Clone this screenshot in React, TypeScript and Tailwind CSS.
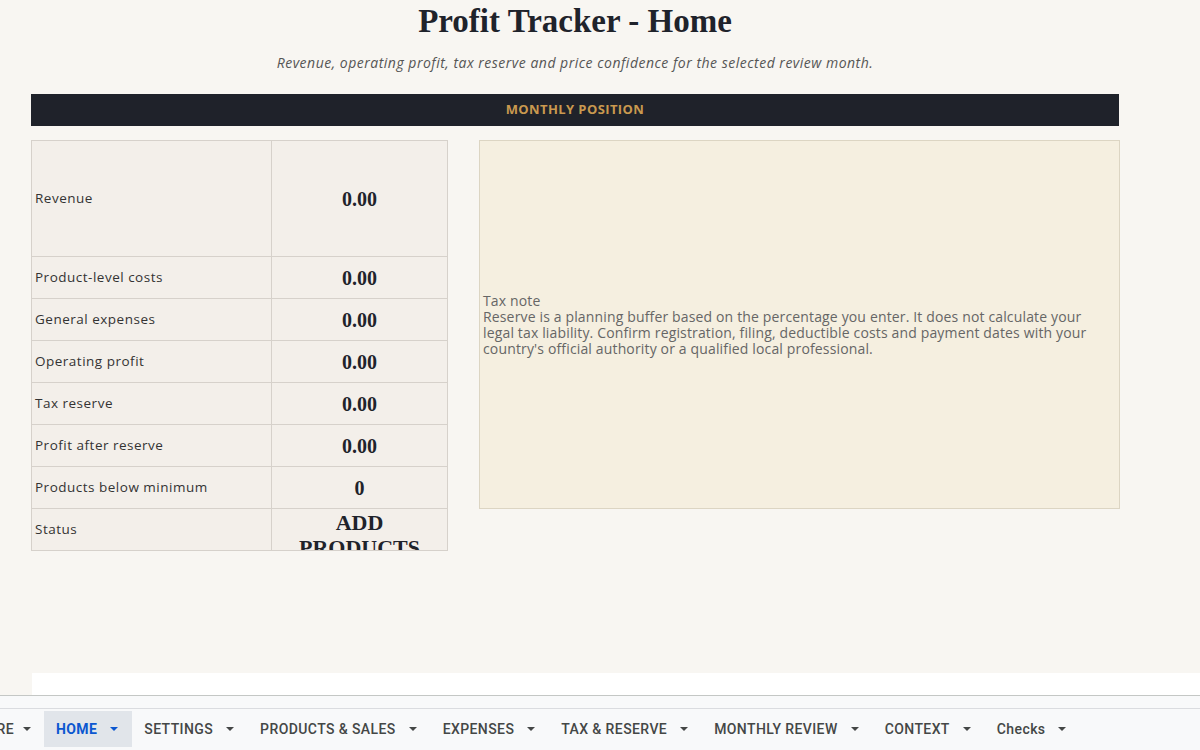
import React from "react";

const rows: { label: string; value: string; tall?: boolean }[] = [
  { label: "Revenue", value: "0.00", tall: true },
  { label: "Product-level costs", value: "0.00" },
  { label: "General expenses", value: "0.00" },
  { label: "Operating profit", value: "0.00" },
  { label: "Tax reserve", value: "0.00" },
  { label: "Profit after reserve", value: "0.00" },
  { label: "Products below minimum", value: "0" },
];

const tabs = ["SETTINGS", "PRODUCTS & SALES", "EXPENSES", "TAX & RESERVE", "MONTHLY REVIEW", "CONTEXT", "Checks"];

function Caret({ className = "fill-[#444746]" }: { className?: string }) {
  return (
    <svg width="8" height="4" viewBox="0 0 8 4" className={className}>
      <path d="M0 0h8L4 4z" />
    </svg>
  );
}

function Tab({ label, active }: { label: string; active?: boolean }) {
  return (
    <div
      className={`flex items-center gap-[13px] pl-3 pr-[14px] h-full shrink-0 ${
        active ? "bg-[#e1e5ea] text-[#0b57d0] font-bold" : "text-[#444746] font-medium"
      }`}
    >
      <span>{label}</span>
      <Caret className={active ? "fill-[#0b57d0]" : "fill-[#444746]"} />
    </div>
  );
}

export default function App() {
  return (
    <div className="w-[1200px] h-[750px] flex flex-col overflow-hidden bg-[#f8f6f2] font-['Open_Sans',sans-serif]">
      <main className="h-[673px] shrink-0">
        <div className="ml-[31px] w-[1088px] flex flex-col items-center">
          <h1 className="mt-[1px] h-[40px] text-[33px] leading-[40px] font-bold text-[#1f232b] font-['Liberation_Serif',serif]">
            Profit Tracker - Home
          </h1>
          <p className="mt-[13px] h-[18px] text-[14px] leading-[18px] italic text-[#555] tracking-[0.5px]">
            Revenue, operating profit, tax reserve and price confidence for the selected review month.
          </p>
          <div className="mt-[22px] w-full h-[32px] bg-[#1f222a] flex items-center justify-center text-[13px] font-bold tracking-[0.4px] text-[#c9994f]">
            MONTHLY POSITION
          </div>
        </div>

        <div className="ml-[31px] mt-[14px] flex items-start gap-[31px]">
          <div className="w-[417px] border-l border-t border-[#d6d1cb] bg-[#f3efea]">
            {rows.map((r) => (
              <div key={r.label} className={`flex border-b border-[#d6d1cb] ${r.tall ? "h-[116px]" : "h-[42px]"}`}>
                <div className="w-[240px] border-r border-[#d6d1cb] flex items-center pl-[3px] text-[13.5px] tracking-[0.5px] text-[#333]">
                  {r.label}
                </div>
                <div className="w-[176px] border-r border-[#d6d1cb] flex items-center justify-center text-[20px] font-bold text-[#1f232b] font-['Liberation_Serif',serif]">
                  {r.value}
                </div>
              </div>
            ))}
            <div className="flex h-[42px] border-b border-[#d6d1cb]">
              <div className="w-[240px] border-r border-[#d6d1cb] flex items-center pl-[3px] text-[13.5px] tracking-[0.5px] text-[#333]">
                Status
              </div>
              <div className="w-[176px] border-r border-[#d6d1cb] overflow-hidden text-center text-[22px] leading-[25px] font-bold text-[#1f232b] font-['Liberation_Serif',serif] pt-[1px] px-6">
                ADD PRODUCTS
              </div>
            </div>
          </div>

          <div className="w-[641px] h-[369px] border border-[#dcd5c3] bg-[#f5efe0] flex items-center pl-[3px]">
            <div className="text-[14px] leading-[16px] tracking-[0.15px] text-[#666]">
              <div>Tax note</div>
              <div>Reserve is a planning buffer based on the percentage you enter. It does not calculate your</div>
              <div>legal tax liability. Confirm registration, filing, deductible costs and payment dates with your</div>
              <div>country's official authority or a qualified local professional.</div>
            </div>
          </div>
        </div>
      </main>

      <div className="h-[22px] shrink-0 ml-[32px] bg-white" />
      <div className="h-[13px] shrink-0 bg-[#f8f9fa] border-t border-[#c4c7c5]" />
      <nav className="h-[39px] shrink-0 bg-[#f8f9fa] border-t border-[#dadce0] flex items-center pt-[2px] font-['Roboto',sans-serif] text-[14px] tracking-[0.4px]">
        <div className="w-[44px] h-full overflow-hidden flex justify-end">
          <div className="flex items-center gap-[9px] pr-[13px] h-full shrink-0 text-[#444746] font-medium">
            <span>START HERE</span>
            <Caret />
          </div>
        </div>
        <Tab label="HOME" active />
        {tabs.map((t) => (
          <Tab key={t} label={t} />
        ))}
      </nav>
      <div className="flex-1 bg-[#f8f9fa]" />
    </div>
  );
}
